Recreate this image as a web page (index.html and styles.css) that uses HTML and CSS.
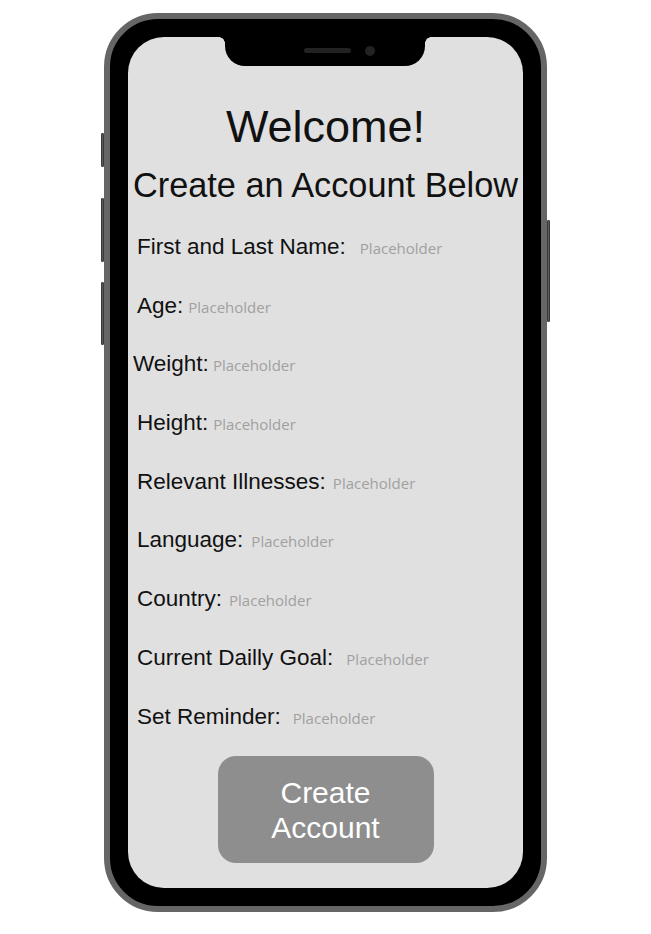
FILE: index.html
```html
<!DOCTYPE html>
<html lang="en">
<head>
<meta charset="utf-8">
<title>Create an Account</title>
<link rel="stylesheet" href="styles.css">
</head>
<body>
<div class="phone">
  <span class="side-btn side-left btn-a"></span>
  <span class="side-btn side-left btn-b"></span>
  <span class="side-btn side-left btn-c"></span>
  <span class="side-btn side-right btn-d"></span>
  <div class="screen">
    <div class="notch">
      <span class="speaker"></span>
      <span class="camera"></span>
    </div>
    <h1 class="welcome">Welcome!</h1>
    <h2 class="subtitle">Create an Account Below</h2>
    <div class="form">
      <div class="row"><span class="label">First and Last Name:</span><span class="ph gap-14">Placeholder</span></div>
      <div class="row"><span class="label">Age:</span><span class="ph gap-5">Placeholder</span></div>
      <div class="row shift"><span class="label">Weight:</span><span class="ph gap-4">Placeholder</span></div>
      <div class="row"><span class="label">Height:</span><span class="ph gap-5">Placeholder</span></div>
      <div class="row"><span class="label">Relevant Illnesses:</span><span class="ph gap-7">Placeholder</span></div>
      <div class="row"><span class="label">Language:</span><span class="ph gap-8">Placeholder</span></div>
      <div class="row"><span class="label">Country:</span><span class="ph gap-7">Placeholder</span></div>
      <div class="row"><span class="label">Current Dailly Goal:</span><span class="ph gap-13">Placeholder</span></div>
      <div class="row"><span class="label">Set Reminder:</span><span class="ph gap-12">Placeholder</span></div>
    </div>
    <button class="create-btn" type="button">Create<br>Account</button>
  </div>
</div>
</body>
</html>
```

FILE: styles.css
```css
html, body {
  margin: 0;
  padding: 0;
  background: #ffffff;
}

body {
  font-family: "Liberation Sans", Arial, sans-serif;
}

.phone {
  position: relative;
  box-sizing: border-box;
  width: 443px;
  height: 899px;
  margin: 13px auto 0;
  padding: 18px;
  border: 6px solid #666666;
  border-radius: 54px;
  background: #000000;
}

.side-btn {
  position: absolute;
  width: 3px;
  background: #5a5a5a;
  border: 1px solid #3a3a3a;
  border-radius: 1px;
  box-sizing: border-box;
}

.side-left {
  left: -9px;
}

.side-right {
  right: -9px;
}

.btn-a { top: 114px; height: 34px; }
.btn-b { top: 179px; height: 64px; }
.btn-c { top: 263px; height: 63px; }
.btn-d { top: 201px; height: 102px; }

.screen {
  position: relative;
  box-sizing: border-box;
  height: 100%;
  padding-top: 68px;
  background: #e0e0e0;
  border-radius: 36px;
  display: flex;
  flex-direction: column;
}

.notch {
  position: absolute;
  top: 0;
  left: 97px;
  width: 200px;
  height: 29px;
  background: #000000;
  border-radius: 0 0 20px 20px;
  display: flex;
  align-items: center;
  justify-content: center;
  gap: 14px;
  padding-left: 28px;
  box-sizing: border-box;
}

.notch::before,
.notch::after {
  content: "";
  position: absolute;
  top: 0;
  width: 6px;
  height: 6px;
}

.notch::before {
  left: -6px;
  background: radial-gradient(circle at 0 100%, transparent 5.5px, #000000 6px);
}

.notch::after {
  right: -6px;
  background: radial-gradient(circle at 100% 100%, transparent 5.5px, #000000 6px);
}

.speaker {
  width: 47px;
  height: 5px;
  border-radius: 3px;
  background: #222222;
  margin-top: -2px;
}

.camera {
  width: 10px;
  height: 10px;
  border-radius: 50%;
  background: #222222;
  margin-top: -2px;
}

.welcome {
  margin: 0;
  font-size: 45px;
  line-height: 44px;
  font-weight: normal;
  text-align: center;
  color: #111111;
}

.subtitle {
  margin: 19px 0 0;
  font-size: 34.3px;
  line-height: 34px;
  font-weight: normal;
  text-align: center;
  color: #111111;
  white-space: nowrap;
}

.form {
  margin-top: 16px;
  padding-left: 9px;
  display: flex;
  flex-direction: column;
}

.row {
  height: 58.7px;
  display: flex;
  align-items: baseline;
}

.row.shift {
  margin-left: -4px;
}

.label {
  font-size: 22.5px;
  line-height: 58.7px;
  color: #111111;
  white-space: nowrap;
}

.ph {
  font-family: "Open Sans", "Noto Sans", sans-serif;
  font-size: 15px;
  line-height: 20px;
  color: #a0a0a0;
}

.gap-4 { margin-left: 4px; }
.gap-5 { margin-left: 5px; }
.gap-7 { margin-left: 7px; }
.gap-8 { margin-left: 8px; }
.gap-12 { margin-left: 12px; }
.gap-13 { margin-left: 13px; }
.gap-14 { margin-left: 14px; }

.create-btn {
  align-self: center;
  margin-top: 10px;
  width: 216px;
  height: 107px;
  border: none;
  border-radius: 18px;
  background: #8e8e8e;
  color: #ffffff;
  font-family: "Liberation Sans", Arial, sans-serif;
  font-size: 30px;
  line-height: 35px;
  padding: 0;
  text-align: center;
}
```
